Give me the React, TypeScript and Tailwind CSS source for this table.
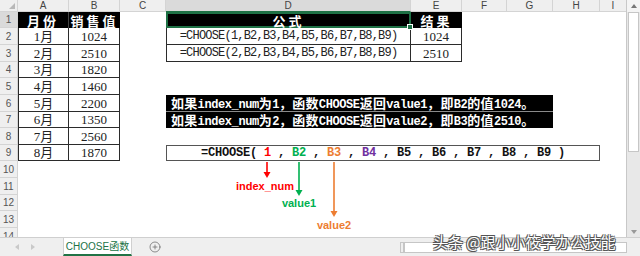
import React from "react";
import { CirclePlus } from "lucide-react";

const CJK = /([\u3000-\u303f\u4e00-\u9fff\uff00-\uffef]+)/;

// latin in mono, CJK runs a bit larger so widths follow the half/full-width grid
function Mixed({ text }: { text: string }) {
  return (
    <span>
      {text.split(CJK).map((part, i) =>
        i % 2 ? (
          <span key={i} className="font-['Noto_Sans_CJK_SC',sans-serif] text-[13px] tracking-[0.3px]">
            {part}
          </span>
        ) : (
          <span key={i}>{part}</span>
        )
      )}
    </span>
  );
}

const A = "w-[51px]";
const B = "w-[51px]";
const C = "w-[46px]";
const D = "w-[245px]";
const E = "w-[51px]";
const F = "w-[45px]";
const G = "w-[46px]";
const H = "w-[47px]";

const heights = [
  "h-[16px]",
  "h-[17px]",
  "h-[17px]",
  "h-[16px]",
  "h-[17px]",
  "h-[17px]",
  "h-[16px]",
  "h-[17px]",
  "h-[16px]",
  "h-[17px]",
  "h-[17px]",
  "h-[16px]",
  "h-[17px]",
  "h-[17px]",
];

const sales = [
  ["1月", "1024"],
  ["2月", "2510"],
  ["3月", "1820"],
  ["4月", "1460"],
  ["5月", "2200"],
  ["6月", "1350"],
  ["7月", "2560"],
  ["8月", "1870"],
];

const tbl =
  "border-r border-b border-[#2b2b2b] text-[13px] text-[#222] font-['Liberation_Serif','Noto_Sans_CJK_SC',serif]";
const headCell =
  "bg-black text-white font-bold text-[13px] tracking-[3px] font-['Noto_Sans_CJK_SC',sans-serif]";

function Cell({
  w,
  className = "",
  children,
}: {
  w: string;
  className?: string;
  children?: React.ReactNode;
}) {
  return (
    <div className={`${w} shrink-0 flex items-center justify-center leading-none ${className}`}>
      {children !== undefined && <span className="whitespace-pre">{children}</span>}
    </div>
  );
}

function Row({ n, children }: { n: number; children?: React.ReactNode }) {
  return (
    <div className={`flex shrink-0 ${heights[n - 1]}`}>
      <div
        className={`w-[18px] shrink-0 flex items-center justify-center border-r border-b border-[#d4d4d4] text-[10px] text-[#555] font-['Liberation_Sans',sans-serif] ${
          n === 1 ? "bg-[#dadada]" : "bg-[#efefef]"
        }`}
      >
        {n}
      </div>
      {children}
    </div>
  );
}

function rowCells(n: number) {
  if (n === 1) {
    return (
      <>
        <Cell w={A} className={`${headCell} border-r border-[#444]`}>月份</Cell>
        <Cell w={B} className={headCell}>销售值</Cell>
        <Cell w={C} />
        <div className={`${D} shrink-0 relative flex items-center justify-center leading-none ${headCell} border-2 border-[#1e7145]`}>
          <span>公式</span>
          <span className="absolute right-[-4px] bottom-[-4px] w-[6px] h-[6px] bg-[#1e7145] border border-white" />
        </div>
        <Cell w={E} className={headCell}>结果</Cell>
      </>
    );
  }
  const [month, value] = n <= 9 ? sales[n - 2] : ["", ""];
  const left =
    n <= 9 ? (
      <>
        <Cell w={A} className={`${tbl} border-l`}>
          {month}
        </Cell>
        <Cell w={B} className={tbl}>
          {value}
        </Cell>
      </>
    ) : (
      <>
        <Cell w={A} />
        <Cell w={B} />
      </>
    );

  let right: React.ReactNode = null;
  if (n === 2 || n === 3) {
    right = (
      <>
        <Cell
          w={D}
          className="border-l border-r border-b border-[#2b2b2b] text-[12px] tracking-[-0.8px] text-[#222] font-['Liberation_Mono',monospace]"
        >
          {n === 2 ? "=CHOOSE(1,B2,B3,B4,B5,B6,B7,B8,B9)" : "=CHOOSE(2,B2,B3,B4,B5,B6,B7,B8,B9)"}
        </Cell>
        <Cell w={E} className={tbl}>
          {n === 2 ? "1024" : "2510"}
        </Cell>
      </>
    );
  }
  if (n === 6 || n === 7) {
    right = (
      <Cell
        w="w-[387px]"
        className={`!justify-start pl-[5px] bg-black text-white font-bold text-[12px] tracking-[-0.4px] font-['Liberation_Mono',monospace] ${
          n === 6 ? "border-b border-[#8a8a8a]" : ""
        }`}
      >
        <Mixed
          text={
            n === 6
              ? "如果index_num为1，函数CHOOSE返回value1，即B2的值1024。"
              : "如果index_num为2，函数CHOOSE返回value2，即B3的值2510。"
          }
        />
      </Cell>
    );
  }
  if (n === 9) {
    right = (
      <Cell
        w="w-[434px]"
        className="border border-[#555] bg-white text-[#111] font-bold text-[12px] tracking-[-0.2px] font-['Liberation_Mono',monospace]"
      >
        {"=CHOOSE( "}
        <span className="text-[#ff0000]">1</span>
        {" , "}
        <span className="text-[#00b050]">B2</span>
        {" , "}
        <span className="text-[#ed7d31]">B3</span>
        {" , "}
        <span className="text-[#7030a0]">B4</span>
        {" , B5 , B6 , B7 , B8 , B9 )"}
      </Cell>
    );
  }

  return (
    <>
      {left}
      <Cell w={C} />
      {right}
    </>
  );
}

export default function App() {
  const cols: [string, string][] = [
    ["A", A],
    ["B", B],
    ["C", C],
    ["D", D],
    ["E", E],
    ["F", F],
    ["G", G],
    ["H", H],
  ];

  return (
    <div className="relative w-[640px] h-[256px] overflow-hidden bg-white flex flex-col select-none">
      <div className="flex flex-1 min-h-0">
        {/* sheet */}
        <div className="relative flex-1 flex flex-col overflow-hidden border-r border-[#c8c8c8]">
          <div className="flex h-[12px] shrink-0 text-[10px] leading-none text-[#444] font-['Liberation_Sans',sans-serif]">
            <div className="w-[18px] shrink-0 bg-[#efefef] border-r border-b border-[#d4d4d4] flex items-end justify-end p-[2px]">
              <span className="w-0 h-0 border-l-[6px] border-l-transparent border-b-[6px] border-b-[#b8b8b8]" />
            </div>
            {cols.map(([name, w]) => (
              <div
                key={name}
                className={`${w} shrink-0 flex items-center justify-center border-r border-b border-[#d4d4d4] ${
                  name === "D" ? "bg-[#dadada] border-b-[#1e7145]" : "bg-[#efefef]"
                }`}
              >
                {name}
              </div>
            ))}
            <div className="flex-1 flex items-center justify-center bg-[#efefef] border-b border-[#d4d4d4]">I</div>
          </div>

          {heights.map((_, i) => (
            <Row key={i} n={i + 1}>
              {rowCells(i + 1)}
            </Row>
          ))}

          {/* arrows pointing from the formula arguments */}
          <svg className="absolute left-0 top-0 pointer-events-none" width="627" height="237">
            <line x1="267" y1="162" x2="267" y2="173" stroke="#ff0000" strokeWidth="1.6" />
            <polygon points="263.5,172 270.5,172 267,178" fill="#ff0000" />
            <line x1="299" y1="162" x2="299" y2="191" stroke="#00b050" strokeWidth="1.6" />
            <polygon points="295.5,190 302.5,190 299,196" fill="#00b050" />
            <line x1="334" y1="162" x2="334" y2="212" stroke="#ed7d31" strokeWidth="1.6" />
            <polygon points="330.5,211 337.5,211 334,217" fill="#ed7d31" />
          </svg>
          <div className="absolute left-[265px] top-[186px] -translate-x-1/2 -translate-y-1/2 text-[11px] font-bold text-[#ff0000] font-['Liberation_Sans',sans-serif]">
            index_num
          </div>
          <div className="absolute left-[299px] top-[203px] -translate-x-1/2 -translate-y-1/2 text-[11px] font-bold text-[#00b050] font-['Liberation_Sans',sans-serif]">
            value1
          </div>
          <div className="absolute left-[334px] top-[225px] -translate-x-1/2 -translate-y-1/2 text-[11px] font-bold text-[#ed7d31] font-['Liberation_Sans',sans-serif]">
            value2
          </div>
        </div>

        {/* vertical scrollbar */}
        <div className="w-[13px] shrink-0 flex flex-col bg-[#e8e8e8]">
          <div className="h-[12px] flex items-center justify-center bg-[#f4f4f4]">
            <span className="w-0 h-0 border-l-[3px] border-r-[3px] border-b-[4px] border-l-transparent border-r-transparent border-b-[#777]" />
          </div>
          <div className="h-[140px] mx-[1px] bg-white border border-[#c6c6c6]" />
          <div className="flex-1" />
          <div className="h-[10px] flex items-center justify-center">
            <span className="w-0 h-0 border-l-[3px] border-r-[3px] border-t-[4px] border-l-transparent border-r-transparent border-t-[#999]" />
          </div>
        </div>
      </div>

      {/* sheet tabs */}
      <div className="h-[19px] shrink-0 flex items-stretch bg-[#efefef] border-t border-[#cfcfcf] font-['Liberation_Sans','Noto_Sans_CJK_SC',sans-serif]">
        <div className="w-[63px] shrink-0 flex items-center gap-[12px] pl-[15px]">
          <span className="w-0 h-0 border-t-[3px] border-b-[3px] border-r-[4px] border-t-transparent border-b-transparent border-r-[#c9c9c9]" />
          <span className="w-0 h-0 border-t-[3px] border-b-[3px] border-l-[4px] border-t-transparent border-b-transparent border-l-[#c9c9c9]" />
        </div>
        <div className="w-[69px] shrink-0 flex items-center justify-center bg-white border-x border-[#d0d0d0] border-b-2 border-b-[#217346] text-[10px] text-[#217346]">
          CHOOSE函数
        </div>
        <div className="w-[45px] shrink-0 flex items-center justify-center text-[#6a6a6a]">
          <CirclePlus size={12} strokeWidth={1.5} />
        </div>
        <div className="flex-1" />
        <div className="w-[240px] shrink-0 flex items-center pr-[13px]">
          <div className="w-[4px] h-[11px] border border-[#c6c6c6]" />
          <div className="flex-1 h-[11px] bg-white border border-[#c6c6c6]" />
        </div>
      </div>

      {/* watermark */}
      <div className="absolute left-[433px] top-[232px] text-[15px] leading-[20px] text-white font-['Noto_Sans_CJK_SC',sans-serif] [text-shadow:1px_1px_0_#555,-1px_-1px_0_#555,1px_-1px_0_#555,-1px_1px_0_#555]">
        头条 @跟小小筱学办公技能
      </div>
    </div>
  );
}
